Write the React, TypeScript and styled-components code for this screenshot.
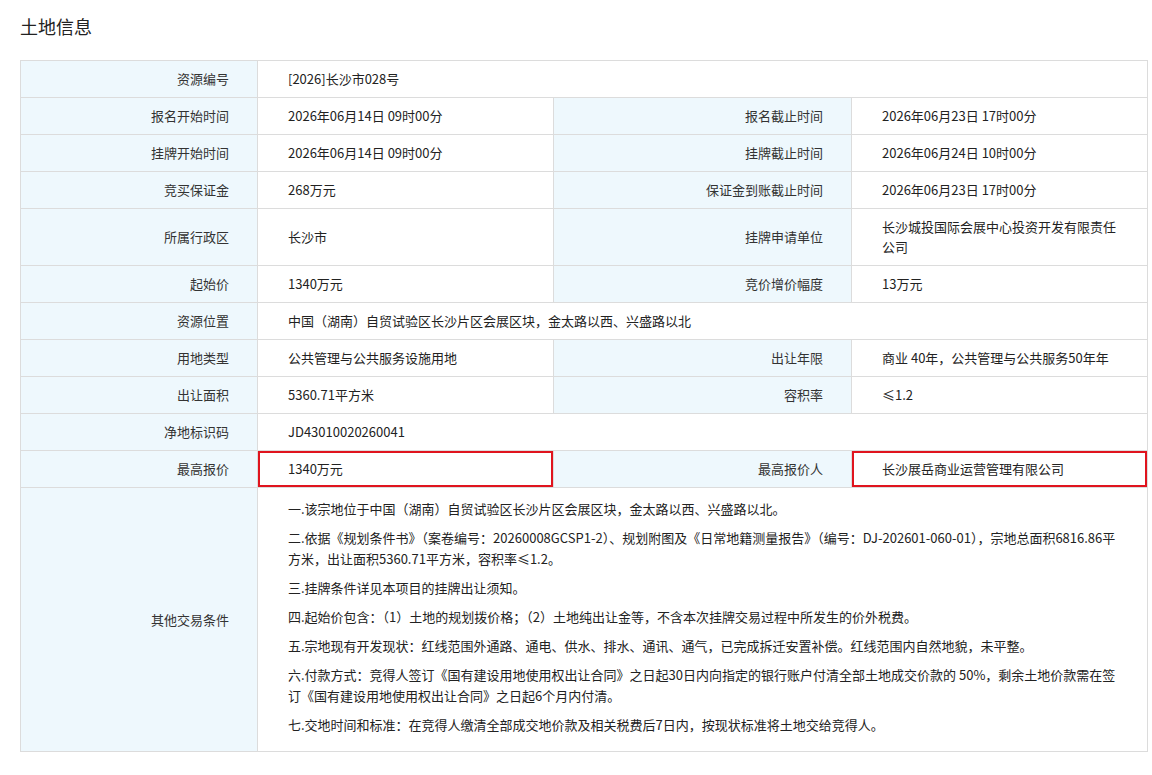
import * as React from 'react';
import styled, { createGlobalStyle } from 'styled-components';

const Global = createGlobalStyle`
    body {
        margin: 0;
        background: #fff;
        font-family: "Noto Sans CJK SC", "Liberation Sans", sans-serif;
        color: #333;
    }
`;

const Page = styled.div`
    padding: 12px 5px 0 20px;
`;

const Title = styled.h2`
    margin: 0 0 20px;
    font-size: 18px;
    font-weight: normal;
    line-height: 28px;
    color: #222;
`;

const Table = styled.table`
    width: 1127px;
    border-collapse: collapse;
    table-layout: fixed;
    font-size: 13px;
`;

const Label = styled.td`
    background: #eef8fd;
    border: 1px solid #dcdcdc;
    text-align: right;
    padding: 8px 28px 8px 10px;
    height: 20px;
    line-height: 20px;
    color: #333;
`;

const Value = styled.td<{ $mark?: boolean }>`
    border: 1px solid #dcdcdc;
    padding: 8px 28px 8px 30px;
    line-height: 20px;
    color: #222;
    box-shadow: ${(p) => (p.$mark ? 'inset 0 0 0 2px #e0141e' : 'none')};
`;

const Terms = styled(Value)`
    padding-top: 10px;
    padding-right: 30px;
`;

const Para = styled.p`
    margin: 0 0 8px;
    line-height: 21px;
`;

interface RowProps {
    a: string;
    b: string;
    c?: string;
    d?: string;
}

const Row: React.FC<RowProps> = ({ a, b, c, d }) => (
    <tr>
        <Label>{a}</Label>
        {c === undefined ? (
            <Value colSpan={3}>{b}</Value>
        ) : (
            <>
                <Value>{b}</Value>
                <Label>{c}</Label>
                <Value>{d}</Value>
            </>
        )}
    </tr>
);

const terms = [
    '一.该宗地位于中国（湖南）自贸试验区长沙片区会展区块，金太路以西、兴盛路以北。',
    '二.依据《规划条件书》（案卷编号：20260008GCSP1-2）、规划附图及《日常地籍测量报告》（编号：DJ-202601-060-01），宗地总面积6816.86平方米，出让面积5360.71平方米，容积率≤1.2。',
    '三.挂牌条件详见本项目的挂牌出让须知。',
    '四.起始价包含：（1）土地的规划拨价格；（2）土地纯出让金等，不含本次挂牌交易过程中所发生的价外税费。',
    '五.宗地现有开发现状：红线范围外通路、通电、供水、排水、通讯、通气，已完成拆迁安置补偿。红线范围内自然地貌，未平整。',
    '六.付款方式：竞得人签订《国有建设用地使用权出让合同》之日起30日内向指定的银行账户付清全部土地成交价款的 50%，剩余土地价款需在签订《国有建设用地使用权出让合同》之日起6个月内付清。',
    '七.交地时间和标准：在竞得人缴清全部成交地价款及相关税费后7日内，按现状标准将土地交给竞得人。',
];

export default function App() {
    return (
        <Page>
            <Global />
            <Title>土地信息</Title>
            <Table>
                <colgroup>
                    <col style={{ width: 237 }} />
                    <col style={{ width: 296 }} />
                    <col style={{ width: 298 }} />
                    <col style={{ width: 296 }} />
                </colgroup>
                <tbody>
                    <Row a="资源编号" b="[2026]长沙市028号" />
                    <Row a="报名开始时间" b="2026年06月14日 09时00分" c="报名截止时间" d="2026年06月23日 17时00分" />
                    <Row a="挂牌开始时间" b="2026年06月14日 09时00分" c="挂牌截止时间" d="2026年06月24日 10时00分" />
                    <Row a="竞买保证金" b="268万元" c="保证金到账截止时间" d="2026年06月23日 17时00分" />
                    <Row a="所属行政区" b="长沙市" c="挂牌申请单位" d="长沙城投国际会展中心投资开发有限责任公司" />
                    <Row a="起始价" b="1340万元" c="竞价增价幅度" d="13万元" />
                    <Row a="资源位置" b="中国（湖南）自贸试验区长沙片区会展区块，金太路以西、兴盛路以北" />
                    <Row a="用地类型" b="公共管理与公共服务设施用地" c="出让年限" d="商业 40年，公共管理与公共服务50年年" />
                    <Row a="出让面积" b="5360.71平方米" c="容积率" d="≤1.2" />
                    <Row a="净地标识码" b="JD43010020260041" />
                    <tr>
                        <Label>最高报价</Label>
                        <Value $mark>1340万元</Value>
                        <Label>最高报价人</Label>
                        <Value $mark>长沙展岳商业运营管理有限公司</Value>
                    </tr>
                    <tr>
                        <Label>其他交易条件</Label>
                        <Terms colSpan={3}>
                            {terms.map((t) => (
                                <Para key={t}>{t}</Para>
                            ))}
                        </Terms>
                    </tr>
                </tbody>
            </Table>
        </Page>
    );
}
